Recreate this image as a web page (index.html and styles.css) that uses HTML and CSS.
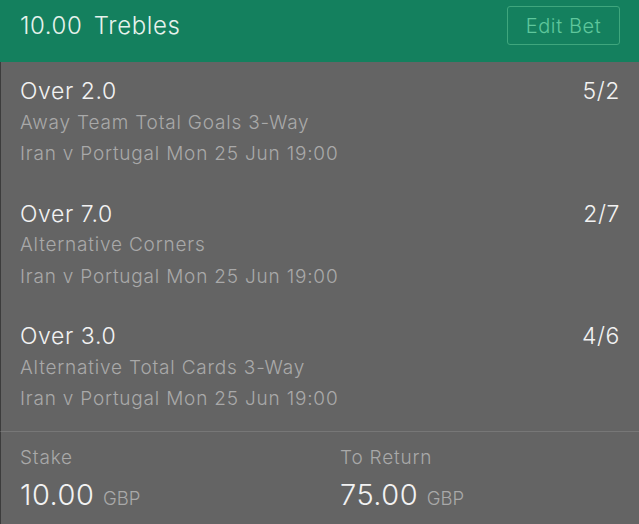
FILE: index.html
```html
<!DOCTYPE html>
<html>
<head>
  <meta charset="utf-8">
  <title>Bet Slip</title>
  <link rel="stylesheet" href="styles.css">
</head>
<body>
  <div class="header">
    <h2><span class="amount">10.00</span> Trebles</h2>
    <button class="edit-btn">Edit Bet</button>
  </div>

  <div class="selections">
    <div class="selection">
      <div class="selection-top">
        <span class="pick">Over 2.0</span>
        <span class="odds">5/2</span>
      </div>
      <div class="market">Away Team Total Goals 3-Way</div>
      <div class="event">Iran v Portugal Mon 25 Jun 19:00</div>
    </div>
    <div class="selection">
      <div class="selection-top">
        <span class="pick">Over 7.0</span>
        <span class="odds">2/7</span>
      </div>
      <div class="market">Alternative Corners</div>
      <div class="event">Iran v Portugal Mon 25 Jun 19:00</div>
    </div>
    <div class="selection">
      <div class="selection-top">
        <span class="pick">Over 3.0</span>
        <span class="odds">4/6</span>
      </div>
      <div class="market">Alternative Total Cards 3-Way</div>
      <div class="event">Iran v Portugal Mon 25 Jun 19:00</div>
    </div>
  </div>

  <div class="summary">
    <div class="summary-col">
      <div class="summary-label">Stake</div>
      <div class="summary-value">10.00 <span class="currency">GBP</span></div>
    </div>
    <div class="summary-col">
      <div class="summary-label">To Return</div>
      <div class="summary-value">75.00 <span class="currency">GBP</span></div>
    </div>
  </div>
</body>
</html>
```

FILE: styles.css
```css
:root {
  --header-bg: #14805e;
  --header-text: #e6f2ec;
  --button-text: #5fc79c;
  --button-border: #3fa67d;
  --panel-bg: #646464;
  --edge-color: #3c3c3c;
  --title-color: #f2f2f2;
  --sub-color: #a9a9a9;
  --divider-color: #777;
}

body {
  font-family: Inter, Roboto, sans-serif;
  font-weight: 300;
  margin: 0;
  padding: 0;
  width: 639px;
  height: 524px;
  overflow: hidden;
  background-color: var(--panel-bg);
}

/* Header bar */
.header {
  background-color: var(--header-bg);
  height: 62px;
  padding: 0 19px 0 20px;
  display: flex;
  justify-content: space-between;
  align-items: flex-start;
  box-sizing: border-box;
}
h2 {
  font-size: 24px;
  font-weight: 300;
  color: var(--header-text);
  margin: 11px 0 0;
  letter-spacing: 0.6px;
}
.amount {
  margin-right: 4px;
}
.edit-btn {
  margin-top: 6px;
  width: 113px;
  height: 39px;
  background: transparent;
  border: 1px solid var(--button-border);
  border-radius: 3px;
  color: var(--button-text);
  font-family: inherit;
  font-weight: 300;
  font-size: 20px;
  letter-spacing: 0.6px;
  padding: 0;
}

/* Selections */
.selections {
  border-left: 1px solid var(--edge-color);
  padding: 13.5px 19px 0 19px;
  height: 369px;
  box-sizing: border-box;
}
.selection {
  height: 122.5px;
}
.selection-top {
  display: flex;
  justify-content: space-between;
  height: 31px;
  align-items: center;
}
.pick, .odds {
  font-size: 23px;
  color: var(--title-color);
  letter-spacing: 0.6px;
}
.market, .event {
  font-size: 19px;
  color: var(--sub-color);
  height: 31.5px;
  line-height: 31.5px;
  letter-spacing: 0.8px;
}

/* Stake / return footer */
.summary {
  border-left: 1px solid var(--edge-color);
  border-top: 1px solid var(--divider-color);
  padding: 14px 19px 0;
  display: grid;
  grid-template-columns: 320px 1fr;
  height: 93px;
  box-sizing: border-box;
}
.summary-label {
  font-size: 19px;
  color: var(--sub-color);
  line-height: 24px;
  letter-spacing: 0.8px;
}
.summary-value {
  font-size: 29px;
  color: var(--title-color);
  margin-top: 9px;
  line-height: 32px;
  letter-spacing: 0.5px;
}
.currency {
  font-size: 18.5px;
  color: var(--sub-color);
  letter-spacing: 0;
}
```
